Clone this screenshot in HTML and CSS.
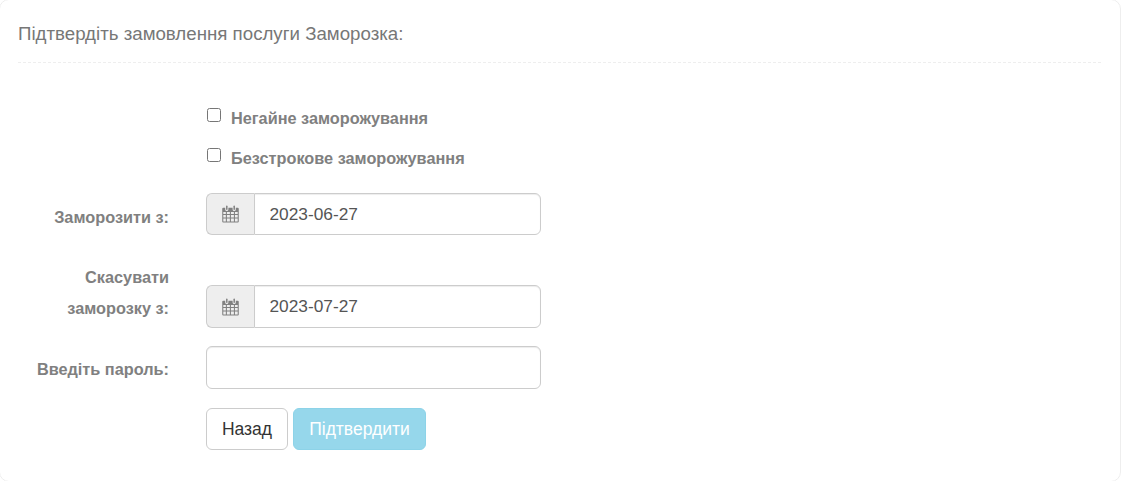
FILE: index.html
```html
<!DOCTYPE html>
<html lang="uk">
<head>
    <meta charset="UTF-8">
    <title>Заморозка</title>
    <link rel="stylesheet" href="styles.css">
</head>
<body>
    <div class="panel">
        <h4 class="panel-title">Підтвердіть замовлення послуги Заморозка:</h4>
        <form class="form">
            <div class="row row-check">
                <label class="check"><input type="checkbox"> Негайне заморожування</label>
            </div>
            <div class="row row-check">
                <label class="check"><input type="checkbox"> Безстрокове заморожування</label>
            </div>
            <div class="row row-from">
                <label class="row-label">Заморозити з:</label>
                <div class="input-group">
                    <span class="addon">
                        <svg class="icon" viewBox="0 0 16 17" width="17" height="18">
                            <path fill="#808080" fill-rule="evenodd" d="M1.2 2.5H3V4.2A1.2 1.2 0 0 0 6 4.2V2.5H10V4.2A1.2 1.2 0 0 0 13 4.2V2.5H14.8A1 1 0 0 1 15.8 3.5V15.5A1 1 0 0 1 14.8 16.5H1.2A1 1 0 0 1 .2 15.5V3.5A1 1 0 0 1 1.2 2.5ZM1.2 6.5V8.5H3.6V6.5ZM4.6 6.5V8.5H7.4V6.5ZM8.4 6.5V8.5H11.2V6.5ZM12.2 6.5V8.5H14.8V6.5ZM1.2 9.5V11.7H3.6V9.5ZM4.6 9.5V11.7H7.4V9.5ZM8.4 9.5V11.7H11.2V9.5ZM12.2 9.5V11.7H14.8V9.5ZM1.2 12.7V15.5H3.6V12.7ZM4.6 12.7V15.5H7.4V12.7ZM8.4 12.7V15.5H11.2V12.7ZM12.2 12.7V15.5H14.8V12.7Z"/>
                            <rect fill="#808080" x="3.8" y="0.5" width="1.4" height="4.2" rx=".7"/>
                            <rect fill="#808080" x="10.8" y="0.5" width="1.4" height="4.2" rx=".7"/>
                        </svg>
                    </span>
                    <input class="field" type="text" value="2023-06-27">
                </div>
            </div>
            <div class="row row-to">
                <label class="row-label">Скасувати заморозку з:</label>
                <div class="input-group">
                    <span class="addon">
                        <svg class="icon" viewBox="0 0 16 17" width="17" height="18">
                            <path fill="#808080" fill-rule="evenodd" d="M1.2 2.5H3V4.2A1.2 1.2 0 0 0 6 4.2V2.5H10V4.2A1.2 1.2 0 0 0 13 4.2V2.5H14.8A1 1 0 0 1 15.8 3.5V15.5A1 1 0 0 1 14.8 16.5H1.2A1 1 0 0 1 .2 15.5V3.5A1 1 0 0 1 1.2 2.5ZM1.2 6.5V8.5H3.6V6.5ZM4.6 6.5V8.5H7.4V6.5ZM8.4 6.5V8.5H11.2V6.5ZM12.2 6.5V8.5H14.8V6.5ZM1.2 9.5V11.7H3.6V9.5ZM4.6 9.5V11.7H7.4V9.5ZM8.4 9.5V11.7H11.2V9.5ZM12.2 9.5V11.7H14.8V9.5ZM1.2 12.7V15.5H3.6V12.7ZM4.6 12.7V15.5H7.4V12.7ZM8.4 12.7V15.5H11.2V12.7ZM12.2 12.7V15.5H14.8V12.7Z"/>
                            <rect fill="#808080" x="3.8" y="0.5" width="1.4" height="4.2" rx=".7"/>
                            <rect fill="#808080" x="10.8" y="0.5" width="1.4" height="4.2" rx=".7"/>
                        </svg>
                    </span>
                    <input class="field" type="text" value="2023-07-27">
                </div>
            </div>
            <div class="row row-pass">
                <label class="row-label">Введіть пароль:</label>
                <input class="field field-full" type="password">
            </div>
            <div class="row-buttons">
                <button class="btn btn-back" type="button">Назад</button>
                <button class="btn btn-confirm" type="button">Підтвердити</button>
            </div>
        </form>
    </div>
</body>
</html>
```

FILE: styles.css
```css
* {
    box-sizing: border-box;
}
html, body {
    height: 100%;
}
body {
    margin: 0;
    background: #fff;
    font-family: "Liberation Sans", Arial, sans-serif;
    color: #777;
    overflow: hidden;
}
.panel {
    height: 483px;
    margin: -1px 0 0 -1px;
    background: #fff;
    border: 1px solid #eee;
    border-radius: 10px;
    padding: 25px 19px 0 18px;
}
.panel-title {
    margin: 0;
    font-size: 18.7px;
    font-weight: normal;
    line-height: 18px;
    padding-bottom: 19px;
    border-bottom: 1px dashed #eee;
    color: #777;
}
.form {
    padding-top: 42px;
}
.row {
    display: grid;
    grid-template-columns: 151px 335px;
    column-gap: 37px;
    align-items: end;
}
.row > .check {
    grid-column: 2;
}
.row-check {
    height: 40px;
}
.check {
    display: block;
    align-self: start;
    padding-top: 3px;
    font-size: 16.3px;
    font-weight: bold;
    line-height: 20px;
    color: #808080;
}
.check input {
    width: 14px;
    height: 14px;
    margin: 0 5.5px 0 1px;
    vertical-align: 2px;
}
.row-from {
    margin-top: 8px;
}
.row-to {
    margin-top: 27px;
}
.row-pass {
    margin-top: 18px;
}
.row-buttons {
    display: flex;
    gap: 5px;
    margin-top: 19px;
    margin-left: 188px;
}
.row-label {
    font-size: 16.3px;
    font-weight: bold;
    line-height: 31px;
    text-align: right;
    padding-bottom: 4px;
    color: #808080;
}
.row-from .row-label {
    padding-bottom: 2px;
}
.input-group {
    display: flex;
    height: 42px;
}
.row-to .input-group {
    height: 43px;
}
.addon {
    width: 48px;
    display: flex;
    align-items: center;
    justify-content: center;
    background: #eee;
    border: 1px solid #ccc;
    border-right: 0;
    border-radius: 6px 0 0 6px;
}
.field {
    flex: 1;
    min-width: 0;
    height: 100%;
    padding: 0 14px 0 14.5px;
    font-family: inherit;
    font-size: 17.3px;
    color: #555;
    border: 1px solid #ccc;
    border-radius: 0 6px 6px 0;
    box-shadow: inset 0 1px 1px rgba(0, 0, 0, 0.075);
    outline: none;
}
.field-full {
    height: 43px;
    border-radius: 6px;
}
.btn {
    height: 42px;
    font-family: inherit;
    font-size: 17.5px;
    border-radius: 6px;
    padding: 0;
    border: 1px solid #ccc;
}
.btn-back {
    width: 82px;
    background: #fff;
    color: #333;
}
.btn-confirm {
    width: 133px;
    background: #96d7eb;
    border-color: #8dd3e8;
    color: #fff;
}
```
